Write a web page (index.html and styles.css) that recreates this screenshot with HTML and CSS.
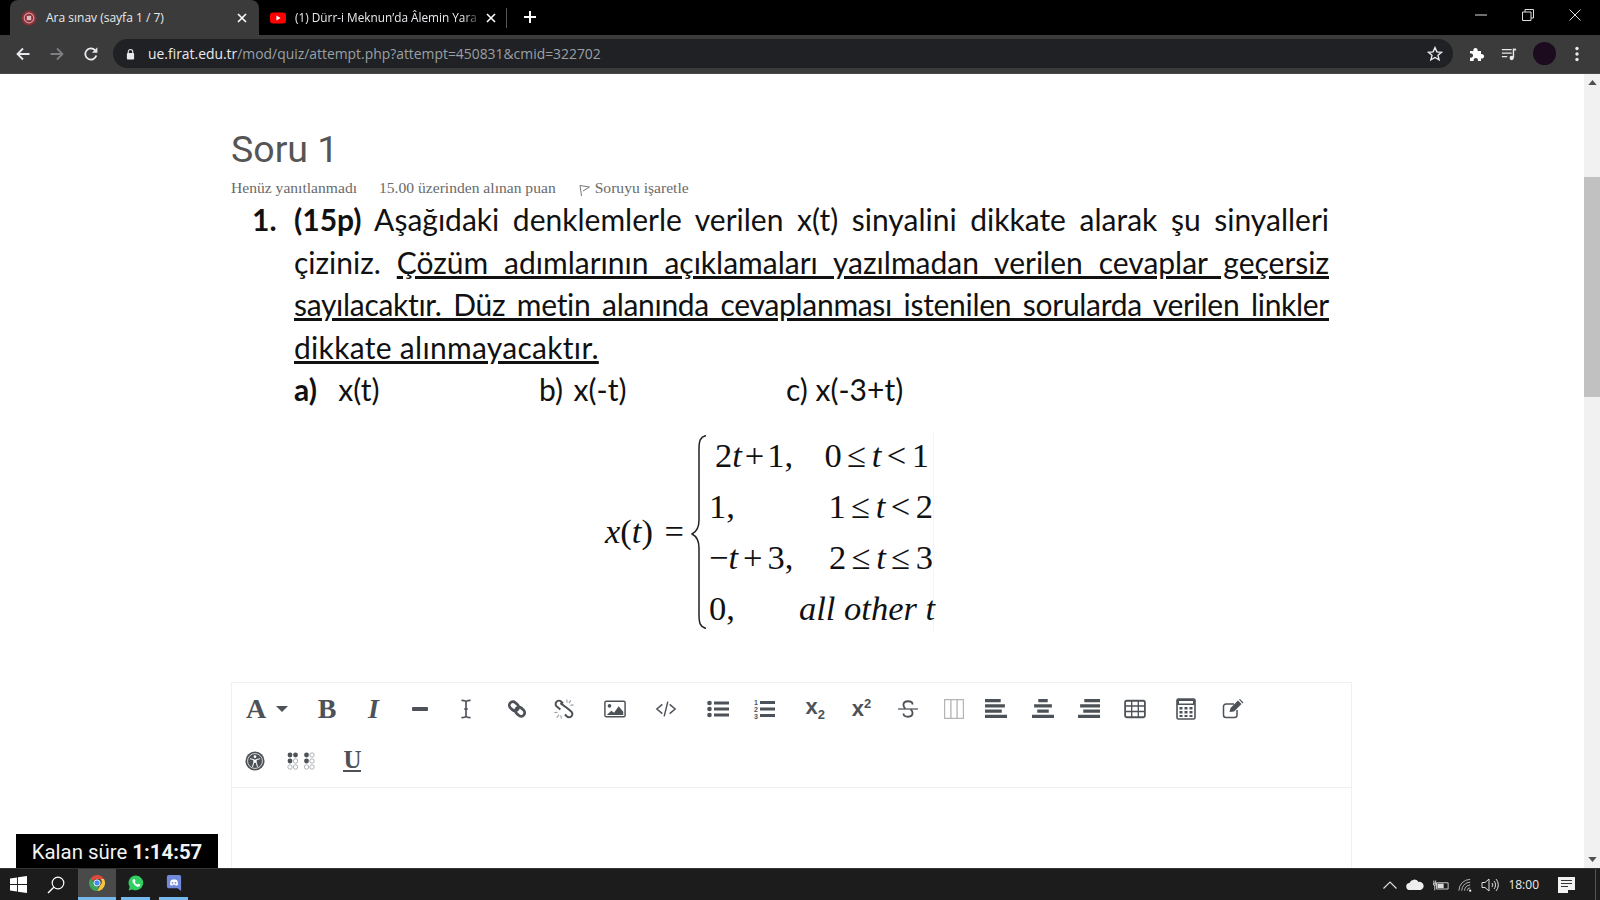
FILE: index.html
```html
<!DOCTYPE html>
<html lang="en">
<head>
  <meta charset="UTF-8" />
  <title>Ara sınav (sayfa 1 / 7)</title>
  <link rel="stylesheet" href="styles.css">
</head>
<body>
  <!-- browser tabs -->
  <div class="tabstrip">
    <div class="tab active">
      <svg class="favicon" viewBox="0 0 16 16"><circle cx="8" cy="8" r="7.500" fill="#8a2f38"/><circle cx="8" cy="8" r="4.800" fill="none" stroke="#cf9a9d" stroke-width="1.200"/><rect x="5.800" y="5.800" width="4.400" height="4.400" fill="#dcbcbc"/></svg>
      <span class="tab-title">Ara sınav (sayfa 1 / 7)</span>
      <svg class="tab-close" viewBox="0 0 10 10"><path d="M1 1l8 8M9 1l-8 8" stroke="#fff" stroke-width="1.600"/></svg>
    </div>
    <div class="tab second">
      <svg class="favicon" viewBox="0 0 16 16"><rect x="0" y="2.500" width="16" height="11" rx="3" fill="#f00"/><path d="M6.400 5.600v4.800L10.600 8z" fill="#fff"/></svg>
      <span class="tab-title fade">(1) Dürr-i Meknun’da Âlemin Yara</span>
      <svg class="tab-close" viewBox="0 0 10 10"><path d="M1 1l8 8M9 1l-8 8" stroke="#fff" stroke-width="1.600"/></svg>
    </div>
    <div class="tab-sep"></div>
    <svg class="tab-new" viewBox="0 0 14 14"><path d="M7 1v12M1 7h12" stroke="#fff" stroke-width="2"/></svg>
    <div class="window-btns">
      <svg viewBox="0 0 12 12"><path d="M0 6h12" stroke="#ddd" stroke-width="1"/></svg>
      <svg viewBox="0 0 12 12"><path d="M.5 3h8.500v8.500H.5zM3 3V.5h8.500V9H9" fill="none" stroke="#ddd" stroke-width="1"/></svg>
      <svg viewBox="0 0 12 12"><path d="M.5.5l11 11M11.500.5l-11 11" stroke="#ddd" stroke-width="1"/></svg>
    </div>
  </div>

  <!-- address bar -->
  <div class="toolbar">
    <svg class="nav-icon" viewBox="0 0 16 16"><path d="M14.500 8H2.500M8 2.500L2.500 8 8 13.500" fill="none" stroke="#e8eaed" stroke-width="1.800"/></svg>
    <svg class="nav-icon" viewBox="0 0 16 16"><path d="M1.500 8H13.500M8 2.500L13.500 8 8 13.500" fill="none" stroke="#7d7f82" stroke-width="1.800"/></svg>
    <svg class="nav-icon" viewBox="0 0 16 16"><path d="M13.300 9.500A5.600 5.600 0 1 1 12 4.200" fill="none" stroke="#e8eaed" stroke-width="1.800"/><path d="M14.400 1.300v5.400H9z" fill="#e8eaed"/></svg>
    <div class="urlbar">
      <svg class="lock" viewBox="0 0 10 12"><path d="M2.500 5V3.500a2.500 2.500 0 0 1 5 0V5" fill="none" stroke="#e8eaed" stroke-width="1.200"/><rect x="1" y="5" width="8" height="7" rx="1" fill="#e8eaed"/></svg>
      <span class="url"><b>ue.firat.edu.tr</b>/mod/quiz/attempt.php?attempt=450831&amp;cmid=322702</span>
      <svg class="star" viewBox="0 0 16 16"><path d="M8 1.600l1.900 4.300 4.600.4-3.500 3 1.100 4.600L8 11.500l-4.100 2.400L5 9.300l-3.500-3 4.600-.4z" fill="none" stroke="#e8eaed" stroke-width="1.400"/></svg>
    </div>
    <div class="tool-icons">
      <svg viewBox="0 0 16 16"><path d="M1 5h3.500a2.200 2.200 0 1 1 4 0H12v3.300a2.200 2.200 0 1 1 0 4V15H8.800a2.200 2.200 0 1 0-4 0H1v-3.500a2.200 2.200 0 1 0 0-4z" fill="#fff"/></svg>
      <svg viewBox="0 0 18 16"><path d="M1 3h11M1 7h11M1 11h6" stroke="#e8eaed" stroke-width="1.500"/><path d="M14 2v10" stroke="#e8eaed" stroke-width="1.600"/><path d="M14 2h3v2h-3z" fill="#e8eaed"/><circle cx="12" cy="12.500" r="2.400" fill="#e8eaed"/></svg>
      <span class="avatar"></span>
      <svg class="dots" viewBox="0 0 16 16"><circle cx="8" cy="2.500" r="1.700" fill="#e8eaed"/><circle cx="8" cy="8" r="1.700" fill="#e8eaed"/><circle cx="8" cy="13.500" r="1.700" fill="#e8eaed"/></svg>
    </div>
  </div>

  <!-- page -->
  <div class="viewport">
    <main class="page">
      <h2 class="question-title">Soru 1</h2>
      <div class="question-meta">
        <span>Henüz yanıtlanmadı</span>
        <span>15.00 üzerinden alınan puan</span>
        <span class="flag">
          <svg viewBox="0 0 12 14"><path d="M2.500 13L1 2.500l9.500 1.500L4 8" fill="none" stroke="#777" stroke-width="1"/></svg>
          Soruyu işaretle
        </span>
      </div>

      <div class="problem">
        <div class="problem-num">1.</div>
        <div class="problem-body">
          <p class="line"><b>(15p)</b> Aşağıdaki denklemlerle verilen x(t) sinyalini dikkate alarak şu sinyalleri</p>
          <p class="line">çiziniz. <u>Çözüm adımlarının açıklamaları yazılmadan verilen cevaplar geçersiz</u></p>
          <p class="line squeeze"><u>sayılacaktır. Düz metin alanında cevaplanması istenilen sorularda verilen linkler</u></p>
          <p class="line last"><u>dikkate alınmayacaktır.</u></p>
          <div class="choices">
            <span class="choice-a"><b>a)</b>&nbsp; x(t)</span>
            <span class="choice-b">b) x(-t)</span>
            <span>c) x(-3+t)</span>
          </div>
        </div>
      </div>

      <div class="math">
        <div class="math-lhs"><i>x</i>(<i>t</i>) =</div>
        <svg class="brace" viewBox="0 0 16 192" preserveAspectRatio="none"><path d="M15 .5C9 2 8 6 8 14V84C8 92 5 96 1 98 5 100 8 104 8 112V178C8 186 9 190 15 191.500" fill="none" stroke="#222" stroke-width="1.500"/></svg>
        <div class="cases">
          <span class="c-a">2<i>t</i><span class="op">+</span>1,</span><span class="c-b first">0<span class="op wide">≤</span><i>t</i><span class="op wide">&lt;</span>1</span>
          <span>1,</span><span class="c-b">1<span class="op wide">≤</span><i>t</i><span class="op wide">&lt;</span>2</span>
          <span>−<i>t</i><span class="op wide-l">+</span>3,</span><span class="c-b">2<span class="op wide">≤</span><i>t</i><span class="op wide">≤</span>3</span>
          <span>0,</span><span class="c-b"><i>all other t</i></span>
        </div>
      </div>

      <div class="editor">
        <div class="ed-toolbar">
          <div class="ed-row">
            <div class="ed-font"><span class="g-a">A</span><svg class="caret" viewBox="0 0 12 6"><path d="M0 0h12L6 6z"/></svg></div>
            <div class="btn"><span class="g-a">B</span></div>
            <div class="btn"><span class="g-a"><i>I</i></span></div>
            <div class="btn"><svg viewBox="0 0 20 20"><rect x="2" y="8" width="16" height="4" rx="1"/></svg></div>
            <div class="btn"><svg viewBox="0 0 20 22"><path d="M5 1.500c3 0 5 .5 5 2v15c0 1.500-2 2-5 2M15 1.500c-3 0-5 .5-5 2v15c0 1.500 2 2 5 2M8 11h4" fill="none" stroke="#4d5258" stroke-width="1.800"/></svg></div>
            <div class="btn gap"><svg viewBox="0 0 22 22"><g fill="none" stroke="#4d5258" stroke-width="3" transform="rotate(42 11 11)"><rect x="1" y="7" width="11" height="8" rx="4"/><rect x="10" y="7" width="11" height="8" rx="4"/></g></svg></div>
            <div class="btn"><svg viewBox="0 0 22 22"><path d="M10 5L8 3a3.600 3.600 0 0 0-5.200 5L7 11.500M12 17l2 2a3.600 3.600 0 0 0 5.200-5L15 10.500M7 4.500l8 6" fill="none" stroke="#4d5258" stroke-width="2.200"/><path d="M14 .5l.5 3.500M18.500 1.500L16.500 4.500M21.500 6.500l-3.500.5M.5 15l3.500-.5M3 20.500l2.500-3M8 21.500l-.5-3.500" stroke="#9a9da1" stroke-width="1.200"/></svg></div>
            <div class="btn gap"><svg class="wide" viewBox="0 0 24 20"><rect x="1" y="1.500" width="22" height="17" rx="1.500" fill="none" stroke="#4d5258" stroke-width="1.600"/><circle cx="6" cy="6.500" r="2" fill="#4d5258"/><path d="M3 16.500l5-4.500 3 2 5-7 5 6v3.500z" fill="#4d5258"/></svg></div>
            <div class="btn gap"><svg class="wide" viewBox="0 0 24 20"><path d="M8 5l-6 5 6 5M16 5l6 5-6 5M14 2l-4 16" fill="none" stroke="#4d5258" stroke-width="1.600"/></svg></div>
            <div class="btn gap"><svg class="wide" viewBox="0 0 22 18"><circle cx="2.500" cy="3" r="2.300"/><circle cx="2.500" cy="9" r="2.300"/><circle cx="2.500" cy="15" r="2.300"/><path d="M7 1.500h15v3H7zM7 7.500h15v3H7zM7 13.500h15v3H7z"/></svg></div>
            <div class="btn"><svg class="wide" viewBox="0 0 22 20"><path d="M7 2h15v3H7zM7 8.500h15v3H7zM7 15h15v3H7z"/><text class="tiny" x="1" y="6">1</text><text class="tiny" x="1" y="13">2</text><text class="tiny" x="1" y="20">3</text></svg></div>
            <div class="btn gap"><span class="g-x">x<sub>2</sub></span></div>
            <div class="btn"><span class="g-x">x<sup>2</sup></span></div>
            <div class="btn"><svg viewBox="0 0 22 22"><path d="M16 6c0-2-2-3.500-5-3.500S6 4 6 6.500c0 1.500 1 3 2 4M6 16c0 2 2 3.500 5 3.500s5-1.500 5-4c0-1.500-1-3-2-4" fill="none" stroke="#4d5258" stroke-width="2"/><path d="M0 11h22" stroke="#4d5258" stroke-width="1.400"/></svg></div>
            <div class="btn"><svg viewBox="0 0 18 18"><path d="M.5 .5h17v17H.5zM6.200 .5v17M11.800 .5v17" fill="none" stroke="#b5b5b5" stroke-width="1.200"/></svg></div>
            <div class="btn pull"><svg class="wide" viewBox="0 0 21 19"><path d="M0 0h15v3H0zM0 5h19v3H0zM0 10h16v3H0zM0 15h21v3H0z"/></svg></div>
            <div class="btn"><svg class="wide" viewBox="0 0 21 19"><path d="M6 0h9v3H6zM2 5h17v3H2zM5 10h11v3H5zM0 15h21v3H0z"/></svg></div>
            <div class="btn"><svg class="wide" viewBox="0 0 21 19"><path d="M6 0h15v3H6zM2 5h19v3H2zM5 10h16v3H5zM0 15h21v3H0z"/></svg></div>
            <div class="btn"><svg class="wide" viewBox="0 0 20 17"><rect x="1" y="1" width="18" height="15" rx="1.500" fill="none" stroke="#4d5258" stroke-width="1.600"/><path d="M1 5.800h18M1 10.800h18M7 1v15M13 1v15" stroke="#4d5258" stroke-width="1.200"/></svg></div>
            <div class="btn gap"><svg class="calc" viewBox="0 0 20 22"><rect x="1" y="1" width="18" height="20" rx="1.500" fill="none" stroke="#4d5258" stroke-width="1.600"/><path d="M1 1h18v6H1zM3.500 9h3v2.500h-3zM8.500 9h3v2.500h-3zM13.500 9h3v2.500h-3zM3.500 13h3v2.500h-3zM8.500 13h3v2.500h-3zM13.500 13h3v2.500h-3zM3.500 17h3v2h-3zM8.500 17h3v2h-3zM13.500 17h3v2h-3z"/><rect x="3" y="3" width="14" height="2.500" fill="#fff"/></svg></div>
            <div class="btn"><svg class="wide" viewBox="0 0 22 20"><path d="M15 11v5a2.500 2.500 0 0 1-2.500 2.500H4A2.500 2.500 0 0 1 1.500 16V7.500A2.500 2.500 0 0 1 4 5h8" fill="none" stroke="#4d5258" stroke-width="1.500"/><path d="M7.500 13l1-4L16 1.500l3.500 3.500-7.500 7.500zM17 .5l1-.5 3.500 3.500-1 1z"/></svg></div>
          </div>
          <div class="ed-row second-row">
            <div class="btn"><svg viewBox="0 0 22 22"><circle cx="11" cy="11" r="10.500" fill="#4d5258"/><circle cx="11" cy="11" r="8.200" fill="none" stroke="#fff" stroke-width=".8"/><circle cx="11" cy="6.300" r="1.500" fill="#fff"/><path d="M5.500 8.500l4.200 1v3l-1.500 5M16.500 8.500l-4.200 1v3l1.500 5" stroke="#fff" stroke-width="1.100" fill="none"/><path d="M9.700 9.500h2.600v3.500H9.700z" fill="#fff"/></svg></div>
            <div class="btn"><svg class="braille" viewBox="0 0 28 18"><g fill="#4d5258"><circle cx="3" cy="3" r="2.400"/><circle cx="8.500" cy="3" r="2.400"/><circle cx="3" cy="9" r="2.400"/><circle cx="19.500" cy="3" r="2.400"/><circle cx="19.500" cy="9" r="2.400"/></g><g fill="none" stroke="#a9acaf" stroke-width=".9"><circle cx="8.500" cy="9" r="2.200"/><circle cx="3" cy="15" r="2.200"/><circle cx="8.500" cy="15" r="2.200"/><circle cx="25" cy="3" r="2.200"/><circle cx="25" cy="9" r="2.200"/><circle cx="19.500" cy="15" r="2.200"/><circle cx="25" cy="15" r="2.200"/></g></svg></div>
            <div class="btn gap"><span class="g-a g-u">U</span></div>
          </div>
        </div>
        <div class="ed-area"></div>
      </div>
    </main>

    <div class="scrollbar">
      <svg class="arrow" viewBox="0 0 10 6"><path d="M0 6h10L5 0z"/></svg>
      <div class="track"><div class="thumb"></div></div>
      <svg class="arrow" viewBox="0 0 10 6"><path d="M0 0h10L5 6z"/></svg>
    </div>

    <div class="timer">Kalan süre <b>1:14:57</b></div>
  </div>

  <!-- windows taskbar -->
  <div class="taskbar">
    <svg class="win-logo" viewBox="0 0 18 18"><path d="M0 2.600L7.400 1.500V8.500H0zM8.400 1.400L18 0V8.500H8.400zM0 9.500H7.400V16.500L0 15.400zM8.400 9.500H18V18L8.400 16.600z" fill="#fff"/></svg>
    <svg class="search" viewBox="0 0 18 18"><circle cx="11" cy="7" r="5.800" fill="none" stroke="#fff" stroke-width="1.200"/><path d="M6.800 11.200L1 17" stroke="#fff" stroke-width="1.400"/></svg>
    <div class="task-app running">
      <svg viewBox="0 0 18 18"><path d="M9 0a9 9 0 0 1 7.800 4.500H9a4.500 4.500 0 0 0-4.300 3.200L2.100 3.300A9 9 0 0 1 9 0z" fill="#e0483c"/><path d="M16.800 4.500A9 9 0 0 1 9 18l3.900-6.700a4.500 4.500 0 0 0 0-6.800z" fill="#f5c63a"/><path d="M9 18A9 9 0 0 1 2.100 3.300l3.900 6.700a4.500 4.500 0 0 0 5 3.100z" fill="#3ba55b"/><circle cx="9" cy="9" r="3.500" fill="#4689f2" stroke="#fff" stroke-width="1"/></svg>
    </div>
    <div class="task-app wa">
      <svg viewBox="0 0 18 18"><path d="M9 .5a8.300 8.300 0 0 0-7.100 12.700L.8 17.300l4.200-1.100A8.300 8.300 0 1 0 9 .5z" fill="#2fcf62"/><path d="M6.300 4.600c-.6.400-1.400 1.300-1.200 2.700.3 2.100 3 5.300 5.700 5.800 1.600.3 2.500-.5 2.900-1.300l.1-1-2-1-.9 1c-1.300-.3-2.700-1.600-3.200-3l.8-.9-.8-2.200z" fill="#fff"/></svg>
    </div>
    <div class="task-app dc">
      <svg viewBox="0 0 16 18"><path d="M2 0h12a2 2 0 0 1 2 2v16l-4-3H2a2 2 0 0 1-2-2V2a2 2 0 0 1 2-2z" fill="#7289da"/><path d="M3.500 11c0-3 .7-5 1.500-5.500C6 5 7 5 8 5s2 0 3 .5c.8.500 1.500 2.500 1.500 5.500-1 .8-1.700 1-2.500 1l-.5-1h-3l-.5 1c-.8 0-1.500-.2-2.500-1z" fill="#fff"/><circle cx="6.300" cy="8.800" r="1" fill="#7289da"/><circle cx="9.700" cy="8.800" r="1" fill="#7289da"/></svg>
    </div>
    <div class="tray">
      <svg class="t-chev" viewBox="0 0 14 8"><path d="M.5 7.500L7 1l6.500 6.500" fill="none" stroke="#ddd" stroke-width="1.200"/></svg>
      <svg class="t-cloud" viewBox="0 0 18 11"><path d="M4 11a3.500 3.500 0 0 1-.5-7A5 5 0 0 1 12.500 3 4 4 0 0 1 14.500 11z" fill="#eee"/></svg>
      <svg class="t-batt" viewBox="0 0 18 12"><path d="M4 3.500h13v7H4z" fill="none" stroke="#ddd"/><path d="M5 4.500h7v5H5z" fill="#ddd"/><path d="M1 1v3M3 1v3M.5 4h3v2H.5zM2 6v6" stroke="#ddd" fill="none"/></svg>
      <svg class="t-wifi" viewBox="0 0 16 14"><path d="M1 13A12 12 0 0 1 13 1M4 13a9 9 0 0 1 9-9M7 13a6 6 0 0 1 6-6M10 13a3 3 0 0 1 3-3" fill="none" stroke="#bbb"/><circle cx="13" cy="13" r="1.200" fill="#eee"/></svg>
      <svg class="t-vol" viewBox="0 0 18 14"><path d="M1 4.500h3L8 1v12L4 9.500H1z" fill="none" stroke="#ddd"/><path d="M11 5a3 3 0 0 1 0 4M13 3a6 6 0 0 1 0 8M15 1a9 9 0 0 1 0 12" fill="none" stroke="#ddd"/></svg>
      <span class="clock">18:00</span>
      <svg class="t-notif" viewBox="0 0 17 16"><path d="M0 0h17v13h-7v3H0z" fill="#f2f2f2"/><path d="M3 3.500h11M3 6.500h11M3 9.500h7" stroke="#333"/></svg>
    </div>
  </div>
</body>
</html>
```
FILE: styles.css
```css
* {
  box-sizing: border-box;
}
html, body {
  height: 100%;
}
body {
  margin: 0;
  width: 1600px;
  height: 900px;
  overflow: hidden;
  display: flex;
  flex-direction: column;
  font-family: "Roboto", sans-serif;
  background: #fff;
}

/* tabs */
.tabstrip {
  height: 35px;
  background: #000;
  display: flex;
  align-items: center;
  color: #e8eaed;
  font-family: "Open Sans", sans-serif;
  font-size: 12px;
}
.tab {
  display: flex;
  align-items: center;
  height: 35px;
}
.tab.active {
  width: 249px;
  margin-left: 10px;
  padding: 0 12px 0 11px;
  background: #3b3b3b;
  border-radius: 8px 8px 0 0;
}
.tab.second {
  width: 245px;
  padding: 0 8px 0 11px;
}
.favicon {
  width: 16px;
  height: 16px;
  flex: none;
  margin-right: 9px;
}
.tab-title {
  flex: 1;
  white-space: nowrap;
}
.tab-title.fade {
  -webkit-mask-image: linear-gradient(to right, #000 90%, transparent);
  font-size: 11.8px;
  margin-bottom: 1px;
}
.tab-close {
  width: 10px;
  height: 10px;
  flex: none;
  margin-left: 4px;
}
.tab-sep {
  width: 1px;
  height: 20px;
  background: #555;
  margin-left: 2px;
}
.tab-new {
  width: 14px;
  height: 14px;
  margin-left: 16px;
  margin-bottom: 1px;
}
.window-btns {
  margin-left: auto;
  display: flex;
  align-items: center;
  gap: 35px;
  padding-right: 19px;
  padding-bottom: 6px;
}
.window-btns svg {
  width: 12px;
  height: 12px;
}

/* address bar */
.toolbar {
  height: 39px;
  background: #3b3b3b;
  border-bottom: 1px solid #4a4a4a;
  display: flex;
  align-items: center;
  padding: 0 0 1px 15px;
  gap: 18px;
}
.nav-icon {
  width: 16px;
  height: 16px;
  flex: none;
}
.urlbar {
  width: 1340px;
  height: 29px;
  margin-left: -4px;
  border-radius: 15px;
  background: #202124;
  display: flex;
  align-items: center;
  padding: 0 10px 0 13px;
  font-family: "Open Sans", sans-serif;
  font-size: 13.9px;
  color: #9aa0a6;
}
.lock {
  width: 9px;
  height: 12px;
  margin-right: 13px;
}
.url {
  flex: 1;
}
.url b {
  font-weight: 400;
  color: #e8eaed;
}
.star {
  width: 16px;
  height: 16px;
}
.tool-icons {
  display: flex;
  align-items: center;
  gap: 16px;
  margin-left: -2px;
}
.tool-icons svg {
  width: 16px;
  height: 16px;
}
.tool-icons svg.dots {
  margin-left: -3px;
}
.avatar {
  width: 23px;
  height: 23px;
  border-radius: 50%;
  background: #1c0a1e;
}

/* page */
.viewport {
  position: relative;
  flex: 1;
  display: flex;
  overflow: hidden;
}
.page {
  flex: 1;
  padding: 57px 0 0 231px;
  overflow: hidden;
}
.question-title {
  margin: 0;
  font-size: 37.5px;
  font-weight: 400;
  line-height: 36px;
  color: #555;
}
.question-meta {
  margin-top: 12px;
  display: flex;
  gap: 22px;
  font-family: "Liberation Serif", serif;
  font-size: 15.6px;
  line-height: 18px;
  color: #6a6a6a;
}
.flag {
  display: flex;
  align-items: center;
  gap: 4px;
  margin-left: 1px;
}
.flag svg {
  width: 12px;
  height: 14px;
  margin-top: 3px;
}

.problem {
  display: flex;
  margin-top: 1px;
  font-family: "Lato", sans-serif;
  font-size: 30px;
  line-height: 42.5px;
  color: #111;
}
.problem-num {
  width: 63px;
  padding-left: 21px;
  font-weight: 700;
}
.problem-body {
  width: 1035px;
}
.line {
  margin: 0;
  text-align: justify;
  text-align-last: justify;
  white-space: nowrap;
}
.line.squeeze {
  word-spacing: -2px;
  letter-spacing: -0.3px;
}
.line.last {
  text-align-last: left;
  letter-spacing: 0.3px;
}
.choices {
  display: flex;
}
.choice-a {
  width: 245px;
  word-spacing: 3px;
}
.choice-b {
  width: 247px;
  word-spacing: 3px;
}

.math {
  display: flex;
  align-items: center;
  margin-top: 21px;
  margin-left: 374px;
  height: 200px;
  font-family: "Liberation Serif", serif;
  font-size: 34.5px;
  color: #111;
}
.math-lhs {
  width: 86px;
  white-space: nowrap;
  word-spacing: 3px;
}
.brace {
  width: 16px;
  height: 194px;
  flex: none;
}
.cases {
  display: grid;
  grid-template-columns: 90px 134px;
  grid-auto-rows: 51px;
  margin-left: 2px;
  align-items: center;
  white-space: nowrap;
  box-shadow: 4px 0 0 -3px #f4f4f4;
}
.c-a {
  padding-left: 6px;
}
.c-b {
  text-align: right;
}
.c-b.first {
  padding-right: 4px;
}
.op {
  margin: 0 3px;
}
.op.wide {
  margin: 0 5.5px;
}
.wide-l {
  margin: 0 5px;
}

/* editor */
.editor {
  margin-top: 50px;
  width: 1121px;
  border: 1px solid #f0f0f0;
  border-bottom: 0;
}
.ed-toolbar {
  display: flex;
  flex-direction: column;
  gap: 2px;
  padding: 1px 0;
  border-bottom: 1px solid #f0f0f0;
}
.ed-row {
  height: 50px;
  display: flex;
  align-items: center;
  color: #4d5258;
  fill: #4d5258;
}
.ed-font {
  width: 72px;
  display: flex;
  align-items: center;
  gap: 10px;
  padding-left: 14px;
}
.caret {
  width: 12px;
  height: 6px;
}
.btn {
  width: 46.3px;
  height: 100%;
  display: flex;
  align-items: center;
  justify-content: center;
}
.btn.gap {
  margin-left: 5px;
}
.btn.pull {
  margin-left: -4px;
}
.btn svg {
  width: 20px;
  height: 20px;
}
.btn svg.wide {
  width: 22px;
  height: 20px;
}
.btn svg.calc {
  width: 20px;
  height: 22px;
}
.btn svg.braille {
  width: 28px;
  height: 18px;
}
.g-a {
  font-family: "Liberation Serif", serif;
  font-weight: 700;
  font-size: 28px;
  line-height: 1;
}
.g-u {
  font-size: 25px;
  border-bottom: 2px solid #4d5258;
  line-height: 20px;
}
.g-x {
  font-family: "Liberation Sans", sans-serif;
  font-weight: 700;
  font-size: 22px;
  line-height: 1;
}
.g-x sub,
.g-x sup {
  font-size: 13px;
}
.tiny {
  font-family: "Liberation Sans", sans-serif;
  font-size: 7px;
  font-weight: 700;
}
.second-row .btn:first-child {
  width: 46px;
}
.ed-area {
  height: 120px;
}

/* page scrollbar */
.scrollbar {
  width: 16px;
  flex: none;
  background: #f1f1f1;
  display: flex;
  flex-direction: column;
  align-items: center;
}
.arrow {
  width: 9px;
  height: 5px;
  margin: 6px 0;
  fill: #505050;
}
.track {
  flex: 1;
  width: 100%;
  padding-top: 86px;
}
.thumb {
  height: 220px;
  background: #c1c1c1;
}

.timer {
  position: absolute;
  left: 16px;
  bottom: 0;
  width: 202px;
  height: 34px;
  background: #000;
  color: #f2f2f2;
  font-size: 20.4px;
  line-height: 36px;
  text-align: center;
}

/* taskbar */
.taskbar {
  height: 32px;
  background: #1c1c1c;
  border-top: 1px solid #333;
  display: flex;
  align-items: center;
}
.win-logo {
  width: 17px;
  height: 17px;
  margin-left: 10px;
}
.search {
  width: 18px;
  height: 18px;
  margin-left: 20px;
}
.task-app {
  width: 38px;
  height: 31px;
  display: flex;
  align-items: center;
  justify-content: center;
  border-bottom: 3px solid #76b9ed;
}
.task-app svg {
  width: 16px;
  height: 16px;
}
.task-app.running {
  margin-left: 13px;
  background: #4a4a4a;
}
.task-app.wa {
  margin-left: 5px;
  width: 29px;
}
.task-app.dc {
  margin-left: 9px;
  width: 29px;
}
.tray {
  margin-left: auto;
  height: 100%;
  display: flex;
  align-items: center;
  color: #eee;
  font-family: "Open Sans", sans-serif;
  font-size: 12px;
  padding-right: 20px;
  margin-right: 4px;
  border-right: 1px solid #555;
}
.t-chev {
  width: 14px;
  height: 8px;
}
.t-cloud {
  width: 18px;
  height: 11px;
  margin-left: 9px;
}
.t-batt {
  width: 16px;
  height: 12px;
  margin-left: 9px;
}
.t-wifi {
  width: 15px;
  height: 14px;
  margin-left: 9px;
}
.t-vol {
  width: 18px;
  height: 14px;
  margin-left: 8px;
}
.clock {
  margin-left: 9px;
}
.t-notif {
  width: 17px;
  height: 16px;
  margin-left: 19px;
}
```
